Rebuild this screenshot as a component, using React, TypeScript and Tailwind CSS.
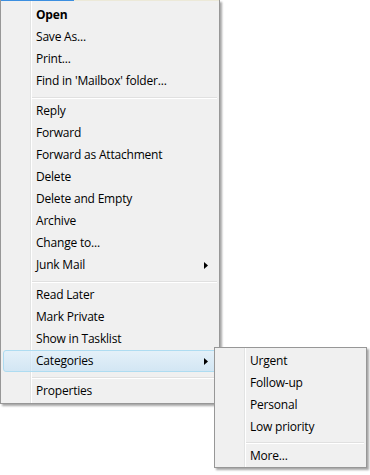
import React from "react";

type Entry =
  | { kind: "item"; label: string; bold?: boolean; submenu?: boolean; active?: boolean }
  | { kind: "sep" };

const MAIN_MENU: Entry[] = [
  { kind: "item", label: "Open", bold: true },
  { kind: "item", label: "Save As..." },
  { kind: "item", label: "Print..." },
  { kind: "item", label: "Find in 'Mailbox' folder..." },
  { kind: "sep" },
  { kind: "item", label: "Reply" },
  { kind: "item", label: "Forward" },
  { kind: "item", label: "Forward as Attachment" },
  { kind: "item", label: "Delete" },
  { kind: "item", label: "Delete and Empty" },
  { kind: "item", label: "Archive" },
  { kind: "item", label: "Change to..." },
  { kind: "item", label: "Junk Mail", submenu: true },
  { kind: "sep" },
  { kind: "item", label: "Read Later" },
  { kind: "item", label: "Mark Private" },
  { kind: "item", label: "Show in Tasklist" },
  { kind: "item", label: "Categories", submenu: true, active: true },
  { kind: "sep" },
  { kind: "item", label: "Properties" },
];

const CATEGORIES_MENU: Entry[] = [
  { kind: "item", label: "Urgent" },
  { kind: "item", label: "Follow-up" },
  { kind: "item", label: "Personal" },
  { kind: "item", label: "Low priority" },
  { kind: "sep" },
  { kind: "item", label: "More..." },
];

// vista style gutter: gray + white line after the icon column
const GUTTER =
  "bg-[linear-gradient(to_right,#f0f0f0_29px,#e2e3e3_29px,#e2e3e3_30px,#ffffff_30px,#ffffff_31px,#f0f0f0_31px)]";

function Arrow() {
  return (
    <svg width="4" height="7" viewBox="0 0 4 7" className="block">
      <path d="M0 0 L4 3.5 L0 7 Z" fill="#000" />
    </svg>
  );
}

function MenuRows({ entries, sepTop }: { entries: Entry[]; sepTop: string }) {
  return (
    <>
      {entries.map((e, i) =>
        e.kind === "sep" ? (
          <div
            key={i}
            className={`${sepTop} mb-px ml-[31px] mr-[2px] h-[2px] border-t border-[#e0e0e0] border-b border-b-white`}
          />
        ) : (
          <div
            key={i}
            className={`mx-[2px] h-[22px] flex items-center pl-[32px] pr-[8px] rounded-[3px] border ${
              e.active
                ? "border-[#aedcf1] bg-gradient-to-b from-[#dff0fc]/70 to-[#bfe0f6]/60"
                : "border-transparent"
            }`}
          >
            <span
              className={`text-[12px] leading-none tracking-[-0.2px] text-black ${
                e.bold ? "font-bold" : ""
              }`}
            >
              {e.label}
            </span>
            {e.submenu && (
              <span className="ml-auto">
                <Arrow />
              </span>
            )}
          </div>
        )
      )}
    </>
  );
}

export default function App() {
  return (
    <div
      className="relative w-[370px] h-[475px] bg-white overflow-hidden"
      style={{ fontFamily: '"Open Sans", "Noto Sans", sans-serif' }}
    >
      {/* main context menu */}
      <div
        className={`w-[220px] ${GUTTER} border-x border-b border-[#979797] shadow-[2px_2px_2px_rgba(0,0,0,0.35)]`}
      >
        <div className="flex h-px">
          <div className="w-[73px] bg-[#3c8fe0]" />
          <div className="flex-1 bg-[#ece9d8]" />
        </div>
        <div className="flex flex-col pt-[3px] pb-px">
          <MenuRows entries={MAIN_MENU} sepTop="mt-[5px]" />
        </div>
      </div>

      {/* categories submenu */}
      <div
        className={`absolute left-[214px] top-[347px] w-[153px] ${GUTTER} border border-[#979797] shadow-[2px_2px_2px_rgba(0,0,0,0.35)]`}
      >
        <div className="flex flex-col pt-[2px]">
          <MenuRows entries={CATEGORIES_MENU} sepTop="mt-[4px]" />
        </div>
      </div>
    </div>
  );
}
